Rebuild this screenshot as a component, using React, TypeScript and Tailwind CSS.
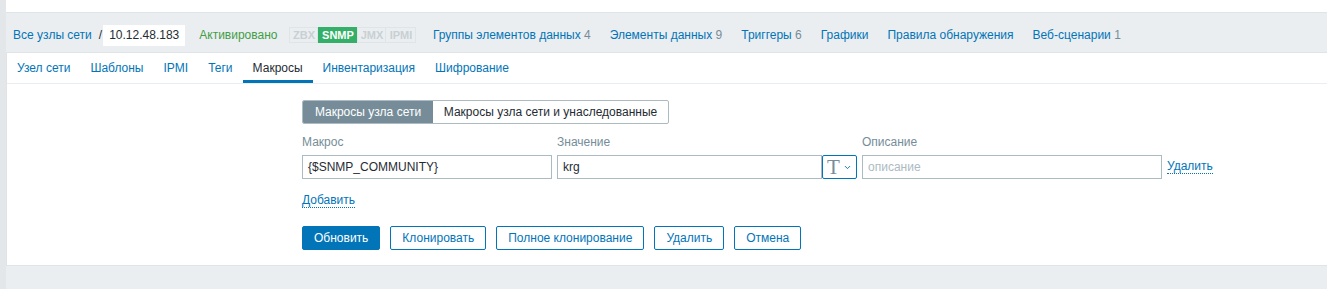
import { ChevronDown } from "lucide-react";

const navItems = [
  { label: "Группы элементов данных", count: "4" },
  { label: "Элементы данных", count: "9" },
  { label: "Триггеры", count: "6" },
  { label: "Графики" },
  { label: "Правила обнаружения" },
  { label: "Веб-сценарии", count: "1" },
];

const tabs = ["Узел сети", "Шаблоны", "IPMI", "Теги", "Макросы", "Инвентаризация", "Шифрование"];

function App() {
  return (
    <div className="flex min-h-[289px] bg-[#ebeef0] text-[12px] text-[#1f2c33] font-['Liberation_Sans',Arial,sans-serif]">
      <div className="w-[6px] shrink-0 bg-[#e4e7ea]" />
      <div className="flex-1 flex flex-col">
        <div className="h-[13px] bg-white border-b border-[#dfe4e7]" />

        {/* host navigation */}
        <div className="h-[40px] pt-[5px] flex items-center pl-[7px] border-b border-[#dfe4e7]">
          <a className="text-[#0275b8]">Все узлы сети</a>
          <span className="ml-[7px] mr-[1px]">/</span>
          <span className="h-[21px] px-[6px] flex items-center bg-white text-[12px]">10.12.48.183</span>
          <span className="ml-[14px] text-[#429e47]">Активировано</span>
          <div className="ml-[12px] flex h-[16px] text-[11px] font-bold leading-none">
            <span className="w-[29px] flex items-center justify-center border border-[#dfe4e7] text-[#c8d0d4]">ZBX</span>
            <span className="w-[39px] flex items-center justify-center bg-[#34af67] text-white">SNMP</span>
            <span className="w-[29px] flex items-center justify-center border border-[#dfe4e7] text-[#c8d0d4]">JMX</span>
            <span className="w-[30px] flex items-center justify-center border border-[#dfe4e7] border-l-0 text-[#c8d0d4]">IPMI</span>
          </div>
          <div className="ml-[7px] flex">
            {navItems.map((n) => (
              <span key={n.label} className="px-[9.5px]">
                <a className="text-[#0275b8]">{n.label}</a>
                {n.count && <span className="text-[#768d99]"> {n.count}</span>}
              </span>
            ))}
          </div>
        </div>

        {/* tab panel */}
        <div className="bg-white border-l border-b border-[#dfe4e7] h-[213px] flex flex-col">
          <div className="flex h-[31px] border-b border-[#ebeef0]">
            {tabs.map((t) =>
              t === "Макросы" ? (
                <span key={t} className="px-[10px] flex items-center border-b-[3px] border-[#0275b8] pt-[3px] text-[#1f2c33]">
                  {t}
                </span>
              ) : (
                <span key={t} className="px-[10px] flex items-center text-[#0275b8]">
                  {t}
                </span>
              )
            )}
          </div>

          <div className="pl-[295px] pt-[16px]">
            <div className="flex h-[24px] w-[367px] border border-[#acbbc2] rounded-[2px] overflow-hidden">
              <span className="w-[130px] flex items-center justify-center bg-[#768d99] text-white">Макросы узла сети</span>
              <span className="flex-1 flex items-center justify-center">Макросы узла сети и унаследованные</span>
            </div>

            <div className="mt-[9px] flex text-[#768d99]">
              <span className="w-[255px]">Макрос</span>
              <span className="w-[305px]">Значение</span>
              <span>Описание</span>
            </div>

            <div className="mt-[4px] flex items-center">
              <div className="w-[250px] h-[24px] border border-[#acbbc2] px-[5px] flex items-center">{"{$SNMP_COMMUNITY}"}</div>
              <div className="ml-[5px] w-[265px] h-[24px] border border-[#acbbc2] px-[5px] flex items-center">krg</div>
              <div className="w-[35px] h-[24px] border border-[#0275b8] rounded-[2px] flex items-center justify-center gap-[3px]">
                <span className="text-[#768d99] text-[21px] leading-none font-['Liberation_Serif',serif]">T</span>
                <ChevronDown size={9} strokeWidth={2.5} className="text-[#0275b8]" />
              </div>
              <div className="ml-[5px] w-[300px] h-[24px] border border-[#acbbc2] px-[5px] flex items-center text-[#acbbc2]">описание</div>
              <a className="ml-[5px] text-[#0275b8] border-b border-dotted border-[#0275b8] leading-[13px]">Удалить</a>
            </div>

            <div className="mt-[12px]">
              <a className="text-[#0275b8] border-b border-dotted border-[#0275b8] leading-[13px]">Добавить</a>
            </div>

            <div className="mt-[17px] flex gap-[10px]">
              <button className="h-[24px] px-[11px] bg-[#0275b8] border border-[#0275b8] rounded-[2px] text-white">Обновить</button>
              <button className="h-[24px] px-[11px] border border-[#0275b8] rounded-[2px] text-[#0275b8]">Клонировать</button>
              <button className="h-[24px] px-[11px] border border-[#0275b8] rounded-[2px] text-[#0275b8]">Полное клонирование</button>
              <button className="h-[24px] px-[11px] border border-[#0275b8] rounded-[2px] text-[#0275b8]">Удалить</button>
              <button className="h-[24px] px-[11px] border border-[#0275b8] rounded-[2px] text-[#0275b8]">Отмена</button>
            </div>
          </div>
        </div>
      </div>
    </div>
  );
}

export default App;
